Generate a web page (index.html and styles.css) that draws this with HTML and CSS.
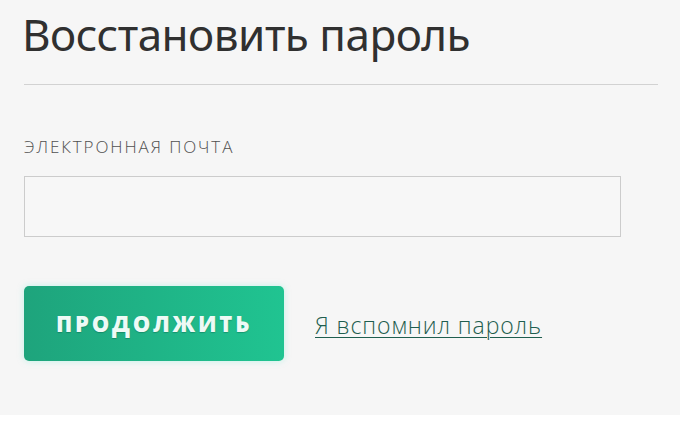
FILE: index.html
```html
<!DOCTYPE html>
<html lang="ru">
<head>
<meta charset="utf-8">
<link rel="stylesheet" href="styles.css">
</head>
<body>
<div class="card">
  <h1 class="title">Восстановить пароль</h1>
  <hr class="divider">
  <label class="label" for="email">ЭЛЕКТРОННАЯ ПОЧТА</label>
  <input class="input" id="email" type="text">
  <div class="actions">
    <button class="btn" type="button">ПРОДОЛЖИТЬ</button>
    <a class="link" href="#">Я вспомнил пароль</a>
  </div>
</div>
</body>
</html>
```
FILE: styles.css
```css
html, body {
  margin: 0;
  padding: 0;
  background: #ffffff;
}
body {
  width: 690px;
  height: 422px;
  overflow: hidden;
  font-family: "Noto Sans", "Open Sans", sans-serif;
}
.card {
  width: 656px;
  height: 415px;
  background: #f6f6f6;
  padding: 0 0 0 24px;
  box-sizing: content-box;
  display: flex;
  flex-direction: column;
  align-items: flex-start;
}
.title {
  margin: 4px 0 0 -2px;
  font-size: 44px;
  font-weight: 400;
  line-height: 60px;
  color: #303030;
  letter-spacing: -0.5px;
}
.divider {
  width: 634px;
  margin: 20px 0 0 0;
  border: 0;
  border-top: 1px solid #d2d2d2;
  height: 0;
}
.label {
  margin-top: 51px;
  font-family: "Open Sans", sans-serif;
  font-size: 17px;
  line-height: 21px;
  color: #505050;
  font-weight: 300;
  letter-spacing: 1.9px;
}
.input {
  margin-top: 19px;
  width: 597px;
  height: 61px;
  box-sizing: border-box;
  border: 1px solid #cccccc;
  background: #f7f7f7;
  outline: none;
}
.actions {
  margin-top: 49px;
  display: flex;
  align-items: center;
  gap: 31px;
}
.btn {
  width: 260px;
  height: 75px;
  border: 0;
  border-radius: 5px;
  background: linear-gradient(90deg, #1ea47c, #20c491);
  color: #eefaf6;
  font-family: "Open Sans", sans-serif;
  font-weight: 800;
  font-size: 22px;
  letter-spacing: 2.8px;
  padding: 0 0 2px 0;
  text-shadow: 0 1px 1px rgba(0, 80, 60, 0.35);
  box-shadow: 0 0 6px rgba(140, 240, 220, 0.5);
}
.link {
  font-family: "Open Sans", sans-serif;
  font-size: 23px;
  font-weight: 300;
  color: #1f5e4f;
  text-decoration: underline;
  text-decoration-thickness: 1px;
  text-underline-offset: 3px;
  letter-spacing: 0.9px;
  margin-top: 2px;
}
```
